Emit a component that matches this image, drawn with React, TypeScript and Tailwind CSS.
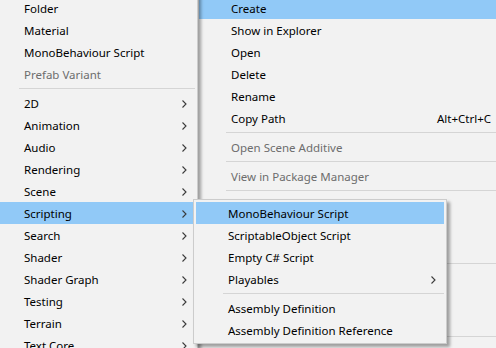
type Item =
  | { sep: true }
  | { label: string; disabled?: boolean; arrow?: boolean; shortcut?: string; active?: boolean };

const createMenu: Item[] = [
  { label: "Folder" },
  { label: "Material" },
  { label: "MonoBehaviour Script" },
  { label: "Prefab Variant", disabled: true },
  { sep: true },
  { label: "2D", arrow: true },
  { label: "Animation", arrow: true },
  { label: "Audio", arrow: true },
  { label: "Rendering", arrow: true },
  { label: "Scene", arrow: true },
  { label: "Scripting", arrow: true, active: true },
  { label: "Search", arrow: true },
  { label: "Shader", arrow: true },
  { label: "Shader Graph", arrow: true },
  { label: "Testing", arrow: true },
  { label: "Terrain", arrow: true },
  { label: "Text Core", arrow: true },
];

const assetsMenu: Item[] = [
  { label: "Create", arrow: true, active: true },
  { label: "Show in Explorer" },
  { label: "Open" },
  { label: "Delete" },
  { label: "Rename" },
  { label: "Copy Path", shortcut: "Alt+Ctrl+C" },
  { sep: true },
  { label: "Open Scene Additive", disabled: true },
  { sep: true },
  { label: "View in Package Manager", disabled: true },
  { sep: true },
  { label: "Import New Asset..." },
  { label: "Import Package", arrow: true },
  { label: "Export Package..." },
  { sep: true },
  { label: "Find References In Scene" },
  { label: "Select Dependencies" },
  { label: "Reimport" },
  { sep: true },
  { label: "Refresh", shortcut: "Ctrl+R" },
];

const scriptingMenu: Item[] = [
  { label: "MonoBehaviour Script", active: true },
  { label: "ScriptableObject Script" },
  { label: "Empty C# Script" },
  { label: "Playables", arrow: true },
  { sep: true },
  { label: "Assembly Definition" },
  { label: "Assembly Definition Reference" },
];

function Chevron() {
  return (
    <svg width="5" height="8" viewBox="0 0 5 8" className="shrink-0">
      <path d="M0.5 0.5 L4 4 L0.5 7.5" fill="none" stroke="#3a3a3a" strokeWidth="1.1" />
    </svg>
  );
}

// one popup menu window (windows overlap each other, so these are positioned)
function Menu({ items, className }: { items: Item[]; className: string }) {
  return (
    <div
      className={`absolute flex flex-col border border-[#cccccc] bg-[#f2f2f2] p-[2px] shadow-[3px_3px_3px_rgba(0,0,0,0.35)] ${className}`}
    >
      {items.map((it, i) =>
        "sep" in it ? (
          <div key={i} className="h-[7px] pt-[3px] pl-[27px]">
            <div className="h-px bg-[#d5d5d5]" />
          </div>
        ) : (
          <div
            key={i}
            className={`flex h-[22px] items-center pt-px pl-[32px] pr-[8px] ${it.active ? "bg-[#91c9f7]" : ""} ${
              it.disabled ? "text-[#6d6d6d]" : "text-black"
            }`}
          >
            <span className={`whitespace-nowrap ${it.shortcut ? "w-[206px] shrink-0" : "flex-1"}`}>{it.label}</span>
            {it.shortcut && <span className="flex-1 whitespace-nowrap">{it.shortcut}</span>}
            {it.arrow && <Chevron />}
          </div>
        )
      )}
    </div>
  );
}

export default function App() {
  return (
    <div className="relative h-[348px] w-[496px] overflow-hidden bg-[#f2f2f2] font-['Noto_Sans',sans-serif] text-[11.5px] leading-none">
      <Menu items={assetsMenu} className="left-[196px] top-[-6px] w-[330px]" />
      <Menu items={createMenu} className="left-[-11px] top-[-6px] w-[209px]" />
      <Menu items={scriptingMenu} className="left-[193px] top-[199px] w-[254px]" />
    </div>
  );
}
